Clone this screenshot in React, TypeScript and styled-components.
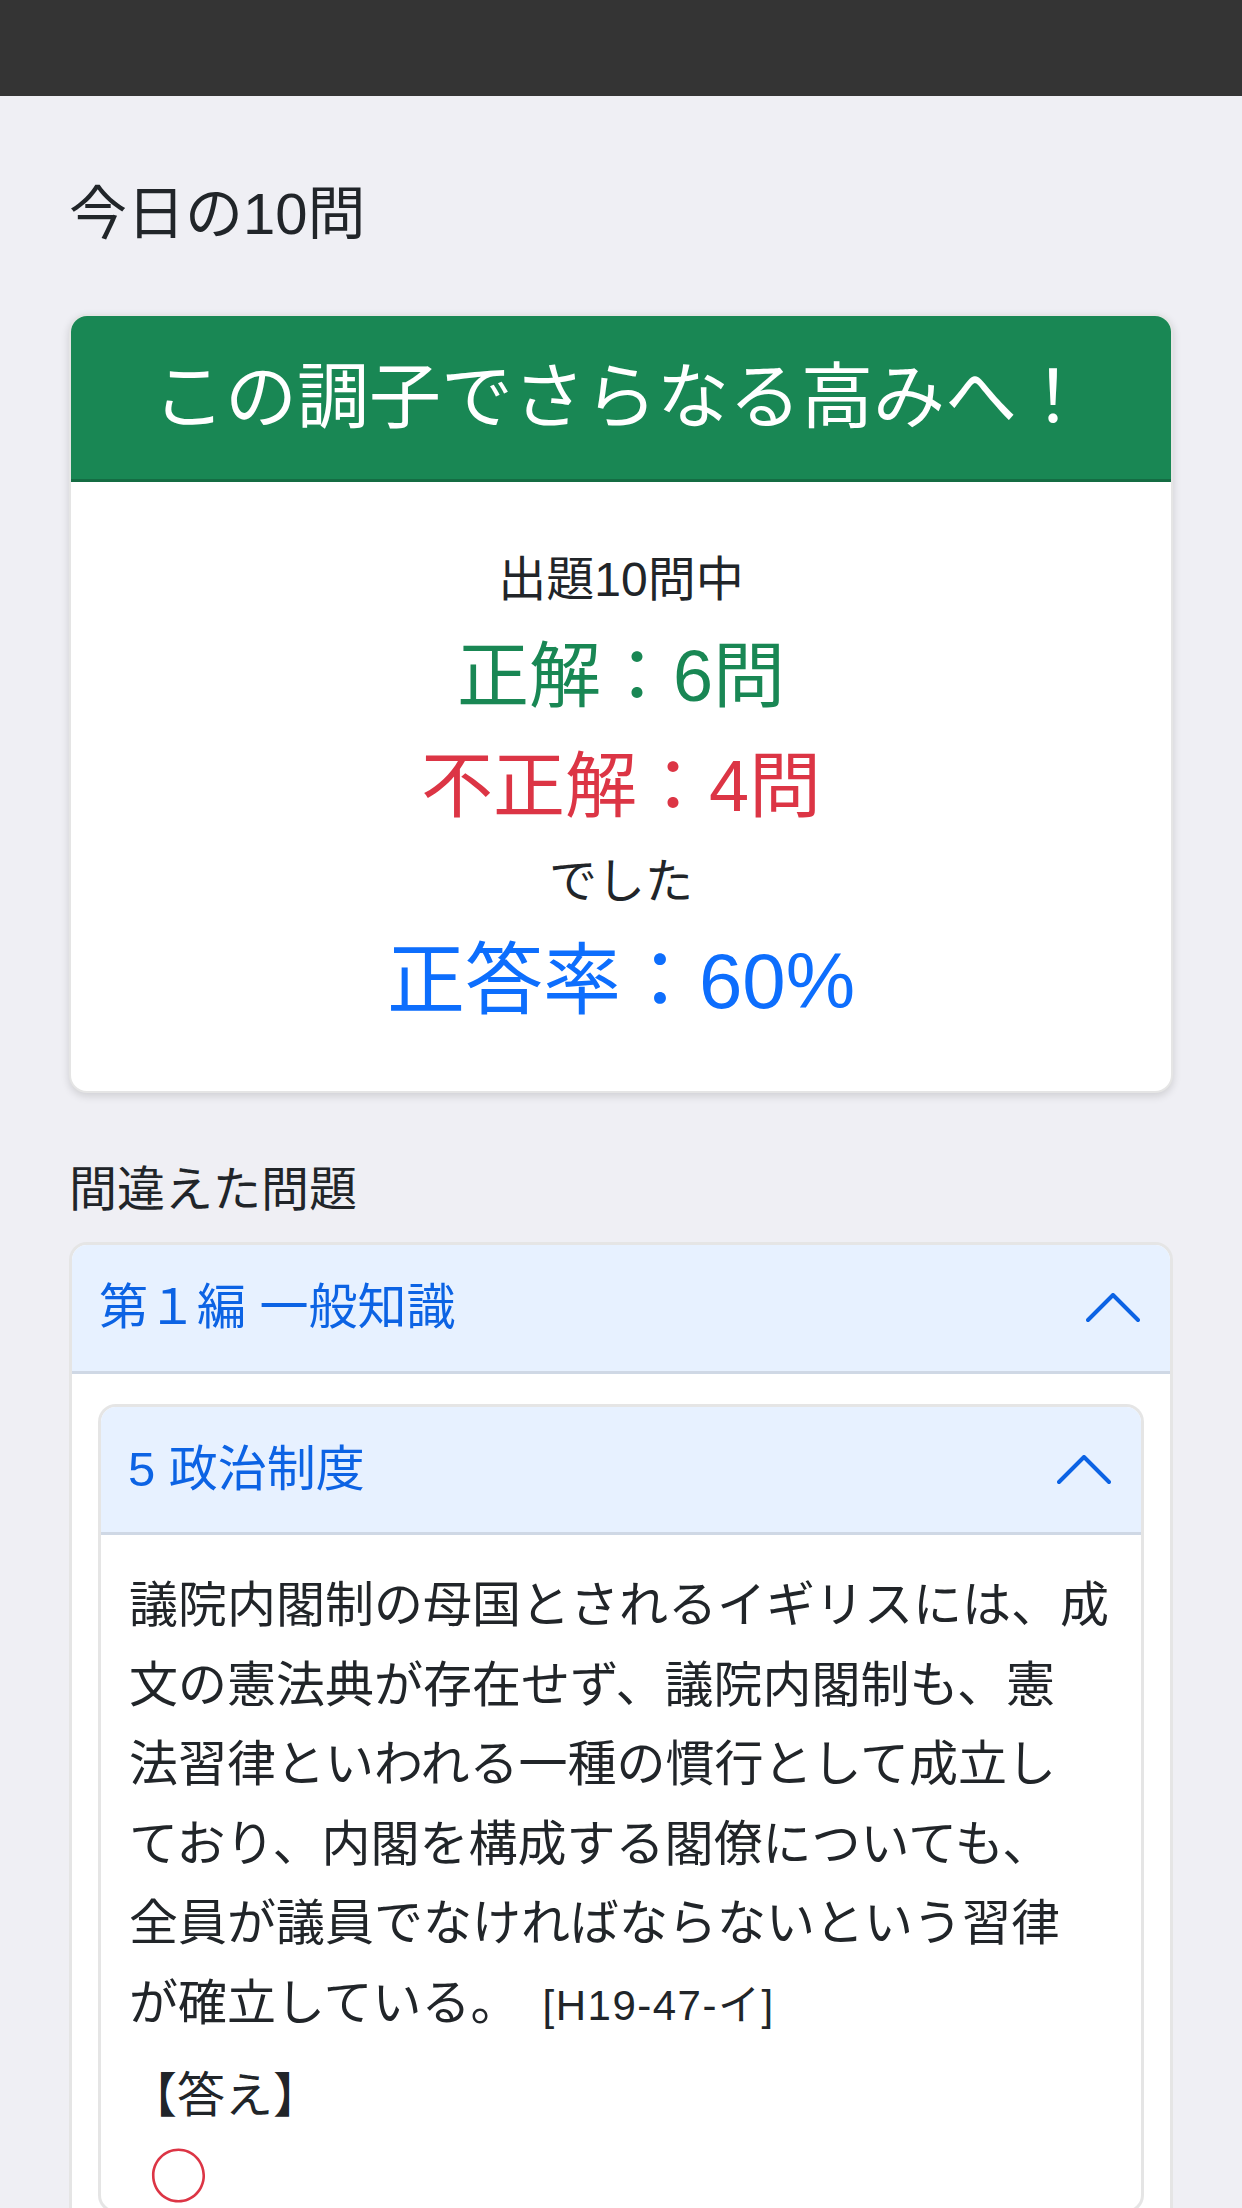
import React from "react";
import styled, { createGlobalStyle } from "styled-components";

const GlobalStyle = createGlobalStyle`
  * { box-sizing: border-box; }
  html, body {
    margin: 0;
    padding: 0;
    background: #efeff4;
  }
  body {
    font-family: "Liberation Sans", "Noto Sans CJK JP", sans-serif;
    color: #212529;
  }
`;

const TopBar = styled.header`
  height: 96px;
  background: #343434;
`;

const Main = styled.main`
  padding: 83px 69px 60px;
`;

const PageTitle = styled.h2`
  margin: 0;
  font-size: 58px;
  line-height: 70px;
  font-weight: 400;
`;

const ResultCard = styled.section`
  margin-top: 65px;
  background: #fff;
  border: 2px solid rgba(0, 0, 0, 0.1);
  border-radius: 18px;
  overflow: hidden;
  box-shadow: 0 3px 8px rgba(0, 0, 0, 0.14);
`;

const CardHeader = styled.div`
  background: #198754;
  color: #fff;
  text-align: center;
  font-size: 72px;
  line-height: 84px;
  padding: 39px 0 40px;
  border-bottom: 3px solid #146c43;
`;

const CardBody = styled.div`
  display: flex;
  flex-direction: column;
  align-items: center;
  gap: 24px;
  padding: 69px 0 62px;
`;

const StatLine = styled.p<{ $size: number; $color?: string }>`
  margin: 0;
  font-size: ${(p) => p.$size}px;
  line-height: 1.2;
  color: ${(p) => p.$color ?? "#212529"};
`;

const SectionLabel = styled.h3`
  margin: 68px 0 0;
  font-size: 48px;
  line-height: 57.6px;
  font-weight: 400;
`;

const Accordion = styled.div<{ $nested?: boolean }>`
  margin-top: ${(p) => (p.$nested ? 0 : 24)}px;
  background: #fff;
  border: 3px solid rgba(0, 0, 0, 0.1);
  border-radius: 18px;
  overflow: hidden;
`;

const AccordionHeader = styled.div`
  display: flex;
  align-items: center;
  justify-content: space-between;
  padding: 34px 30px 34px 27px;
  background: #e7f1ff;
  color: #0c63e4;
  font-size: 49px;
  line-height: 57.6px;
  border-bottom: 3px solid rgba(0, 0, 0, 0.1);
`;

const AccordionBody = styled.div<{ $nested?: boolean }>`
  padding: ${(p) => (p.$nested ? "31px 24px 0 28px" : "30px 26px")};
`;

const Chevron = styled.svg`
  flex: none;
  display: block;
`;

const QuestionText = styled.p`
  margin: 0;
  font-size: 49px;
  line-height: 79.5px;
`;

const RefTag = styled.span`
  margin-left: 23px;
  font-size: 42px;
  letter-spacing: 1.5px;
`;

const AnswerLabel = styled.p`
  margin: 11px 0 0;
  font-size: 48px;
  line-height: 79.5px;
`;

const Mark = styled.p`
  margin: 0;
  padding-left: 20px;
  font-family: "Noto Sans CJK JP", sans-serif;
  font-size: 59px;
  font-weight: 700;
  line-height: 74px;
  color: #dc3545;
`;

const ChevronUp = () => (
  <Chevron width="54" height="30" viewBox="0 0 54 30" aria-hidden="true">
    <polyline
      points="2,27 27,2 52,27"
      fill="none"
      stroke="#0c63e4"
      strokeWidth="4"
      strokeLinecap="round"
      strokeLinejoin="round"
    />
  </Chevron>
);

export default function App() {
  return (
    <>
      <GlobalStyle />
      <TopBar />
      <Main>
        <PageTitle>今日の10問</PageTitle>
        <ResultCard>
          <CardHeader>この調子でさらなる高みへ！</CardHeader>
          <CardBody>
            <StatLine $size={48}>出題10問中</StatLine>
            <StatLine $size={72} $color="#198754">正解：6問</StatLine>
            <StatLine $size={72} $color="#dc3545">不正解：4問</StatLine>
            <StatLine $size={48}>でした</StatLine>
            <StatLine $size={78} $color="#0d6efd">正答率：60%</StatLine>
          </CardBody>
        </ResultCard>

        <SectionLabel>間違えた問題</SectionLabel>
        <Accordion>
          <AccordionHeader>
            <span>第１編 一般知識</span>
            <ChevronUp />
          </AccordionHeader>
          <AccordionBody>
            <Accordion $nested>
              <AccordionHeader>
                <span>5 政治制度</span>
                <ChevronUp />
              </AccordionHeader>
              <AccordionBody $nested>
                <QuestionText>
                  議院内閣制の母国とされるイギリスには、成
                  <br />
                  文の憲法典が存在せず、議院内閣制も、憲
                  <br />
                  法習律といわれる一種の慣行として成立し
                  <br />
                  ており、内閣を構成する閣僚についても、
                  <br />
                  全員が議員でなければならないという習律
                  <br />
                  が確立している。<RefTag>[H19-47-イ]</RefTag>
                </QuestionText>
                <AnswerLabel>【答え】</AnswerLabel>
                <Mark>○</Mark>
              </AccordionBody>
            </Accordion>
          </AccordionBody>
        </Accordion>
      </Main>
    </>
  );
}
